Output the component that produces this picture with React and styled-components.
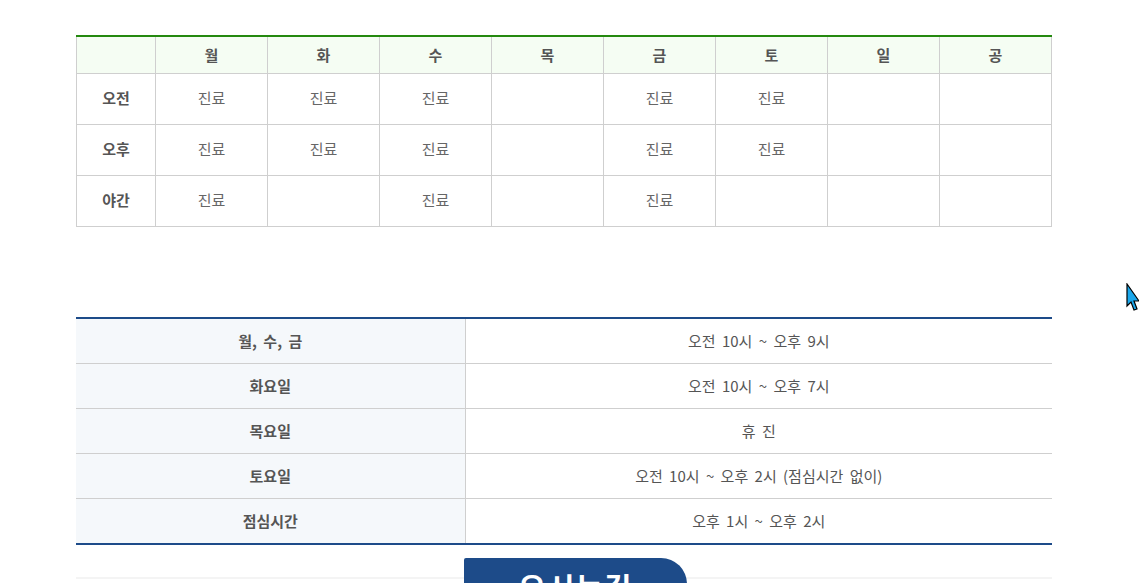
import React from 'react';
import styled, { createGlobalStyle } from 'styled-components';

const GlobalStyle = createGlobalStyle`
  html, body {
    margin: 0;
    padding: 0;
    background: #ffffff;
    overflow: hidden;
  }
  body {
    font-family: "Noto Sans CJK KR", "Noto Sans", sans-serif;
    color: #555;
  }
`;

const weekDays = ['월', '화', '수', '목', '금', '토', '일', '공'];

const weekly = [
  { label: '오전', days: [1, 1, 1, 0, 1, 1, 0, 0] },
  { label: '오후', days: [1, 1, 1, 0, 1, 1, 0, 0] },
  { label: '야간', days: [1, 0, 1, 0, 1, 0, 0, 0] },
];

const hours = [
  { day: '월, 수, 금', time: '오전 10시 ~ 오후 9시' },
  { day: '화요일', time: '오전 10시 ~ 오후 7시' },
  { day: '목요일', time: '휴 진' },
  { day: '토요일', time: '오전 10시 ~ 오후 2시 (점심시간 없이)' },
  { day: '점심시간', time: '오후 1시 ~ 오후 2시' },
];

const App = () => (
  <>
    <GlobalStyle />
    <Page>
      <ScheduleTable>
        <colgroup>
          <col style={{ width: 79 }} />
          {weekDays.map((d) => (
            <col key={d} />
          ))}
        </colgroup>
        <thead>
          <tr>
            <HeadCell />
            {weekDays.map((d) => (
              <HeadCell key={d}>{d}</HeadCell>
            ))}
          </tr>
        </thead>
        <tbody>
          {weekly.map((row) => (
            <tr key={row.label}>
              <RowLabel>{row.label}</RowLabel>
              {row.days.map((open, i) => (
                <DayCell key={i}>{open ? '진료' : ''}</DayCell>
              ))}
            </tr>
          ))}
        </tbody>
      </ScheduleTable>

      <HoursTable>
        <colgroup>
          <col style={{ width: 389 }} />
          <col />
        </colgroup>
        <tbody>
          {hours.map((h) => (
            <tr key={h.day}>
              <DayName>{h.day}</DayName>
              <TimeCell>{h.time}</TimeCell>
            </tr>
          ))}
        </tbody>
      </HoursTable>

      <MapStrip>
        <MapButton>오시는길</MapButton>
      </MapStrip>
    </Page>

    {/* mouse pointer captured in the screenshot */}
    <Cursor width="14" height="30" viewBox="0 0 14 30">
      <path d="M1 1 L1 23 L5 19 L8 27 L11 26 L8 18 L13 18 Z" fill="#1aa7ec" stroke="#000" strokeWidth="1.2" strokeLinejoin="miter" />
    </Cursor>
  </>
);

const Page = styled.div`
  width: 976px;
  margin-left: 76px;
  padding-top: 35px;
  height: 583px;
  box-sizing: border-box;
  overflow: hidden;
`;

const ScheduleTable = styled.table`
  width: 976px;
  border-collapse: collapse;
  table-layout: fixed;
  border-top: 2px solid #24890f;
`;

const HeadCell = styled.th`
  height: 34px;
  padding: 0 0 2px;
  background: #f5fdf3;
  border: 1px solid #cfcfcf;
  border-top: 2px solid #24890f;
  font-size: 15px;
  font-weight: bold;
  color: #555;
  text-align: center;
`;

const RowLabel = styled.th`
  height: 47px;
  padding: 0 0 3px;
  border: 1px solid #cfcfcf;
  font-size: 15px;
  font-weight: bold;
  color: #555;
  text-align: center;
`;

const DayCell = styled.td`
  height: 47px;
  padding: 0 0 3px;
  border: 1px solid #cfcfcf;
  font-size: 15px;
  color: #666;
  text-align: center;
`;

const HoursTable = styled.table`
  width: 976px;
  margin-top: 90px;
  border-collapse: collapse;
  table-layout: fixed;
  border-top: 2px solid #1d4b89;
  border-bottom: 2px solid #1d4b89;
`;

const DayName = styled.th`
  height: 42px;
  padding: 0 0 2px;
  background: #f5f8fb;
  border-top: 1px solid #cfcfcf;
  border-right: 1px solid #cfcfcf;
  font-size: 15px;
  font-weight: bold;
  color: #555;
  text-align: center;
  word-spacing: 3px;
`;

const TimeCell = styled.td`
  height: 42px;
  padding: 0 0 2px;
  border-top: 1px solid #cfcfcf;
  font-size: 15px;
  color: #555;
  text-align: center;
  word-spacing: 3px;
`;

const MapStrip = styled.div`
  margin-top: 13px;
  height: 40px;
  background: linear-gradient(to bottom, transparent 19px, #f4f4f4 19px, #f4f4f4 21px, transparent 21px);
`;

const MapButton = styled.div`
  margin-left: 388px;
  width: 223px;
  height: 40px;
  background: #1d4b89;
  border-top-right-radius: 26px;
  border-top-left-radius: 2px;
  color: #fff;
  font-size: 30px;
  font-weight: bold;
  text-align: center;
  line-height: 56px;
  letter-spacing: 1px;
`;

const Cursor = styled.svg`
  position: absolute;
  left: 1126px;
  top: 283px;
`;

export default App;
